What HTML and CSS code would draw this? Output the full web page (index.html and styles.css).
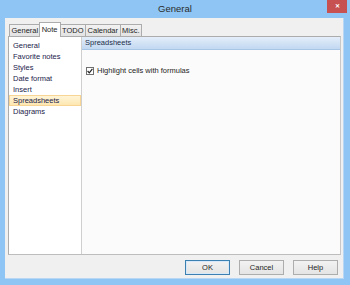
FILE: index.html
```html
<!DOCTYPE html>
<html lang="en">
<head>
    <meta charset="UTF-8">
    <meta name="viewport" content="width=device-width, initial-scale=1.0">
    <title>General</title>
    <link rel="stylesheet" href="styles.css">
</head>
<body>
    <div class="window">
        <div class="titlebar">
            <span class="title">General</span>
            <div class="close">&#10005;</div>
        </div>

        <div class="client">
            <div class="tabs">
                <div class="tab">General</div>
                <div class="tab active">Note</div>
                <div class="tab">TODO</div>
                <div class="tab">Calendar</div>
                <div class="tab">Misc.</div>
            </div>

            <div class="page">
                <div class="list">
                    <div class="item">General</div>
                    <div class="item">Favorite notes</div>
                    <div class="item">Styles</div>
                    <div class="item">Date format</div>
                    <div class="item">Insert</div>
                    <div class="item selected">Spreadsheets</div>
                    <div class="item">Diagrams</div>
                </div>

                <div class="panel">
                    <div class="panel-header">Spreadsheets</div>
                    <div class="panel-body">
                        <label class="check">
                            <span class="box">
                                <svg width="6" height="6" viewBox="0 0 6 6"><path d="M0.6 3 L2.3 4.8 L5.4 0.9" fill="none" stroke="#222" stroke-width="1.2"/></svg>
                            </span>
                            Highlight cells with formulas
                        </label>
                    </div>
                </div>
            </div>

            <div class="buttons">
                <button class="btn default">OK</button>
                <button class="btn">Cancel</button>
                <button class="btn">Help</button>
            </div>
        </div>
    </div>
</body>
</html>
```

FILE: styles.css
```css
body {
    margin: 0;
    padding: 0;
    font-family: "Liberation Sans", Arial, sans-serif;
    font-size: 7.5px;
    color: #1e1e1e;
}

.window {
    width: 350px;
    height: 285px;
    background-color: #8ec5f4;
    display: flex;
    flex-direction: column;
    box-sizing: border-box;
}

.titlebar {
    position: relative;
    height: 18px;
    text-align: center;
}

.title {
    display: inline-block;
    font-size: 9.5px;
    line-height: 18px;
    color: #2b2b2b;
}

.close {
    position: absolute;
    top: 0;
    left: 327px;
    width: 20px;
    height: 13px;
    background-color: #c75050;
    color: white;
    font-size: 6px;
    font-weight: bold;
    line-height: 13px;
    text-align: center;
}

.client {
    flex: 1;
    margin: 0 6px 6px 5px;
    background-color: #f0f0f0;
    border: 1px solid #b9d7f4;
    border-width: 0 1px 1px 0;
    padding: 0 0 0 3px;
    display: flex;
    flex-direction: column;
}

.tabs {
    display: flex;
    align-items: flex-end;
    height: 18px;
    padding-left: 1px;
}

.tab {
    height: 11px;
    line-height: 11px;
    padding: 0 1.5px;
    border: 1px solid #acacac;
    border-bottom: none;
    margin-right: -1px;
    background: linear-gradient(#f2f2f2, #e3e3e3);
}

.tab.active {
    height: 14px;
    line-height: 14px;
    background: #fff;
    margin: 0 -1px -1px -1px;
    padding: 0 2px;
    position: relative;
    z-index: 1;
}

.page {
    display: flex;
    width: 333px;
    height: 219px;
    border: 1px solid #acacac;
    border-right-color: #c8c8c8;
    border-bottom-color: #bdbdbd;
    box-sizing: border-box;
    background-color: #fff;
}

.list {
    width: 73px;
    background-color: #fff;
    border-right: 1px solid #cfcfcf;
    padding-top: 3px;
    box-sizing: border-box;
}

.item {
    height: 11px;
    line-height: 11px;
    padding-left: 4px;
    color: #1a1a4a;
}

.item.selected {
    background: linear-gradient(#fff6dc, #fde6ad);
    box-shadow: inset 0 0 0 1px #f8d595;
}

.panel {
    flex: 1;
    display: flex;
    flex-direction: column;
    background-color: #fbfbfb;
}

.panel-header {
    height: 12px;
    line-height: 12px;
    padding-left: 3px;
    background: linear-gradient(#e4eefa, #c2d8f1);
    border-bottom: 1px solid #a8c5e6;
    color: #1c2f4a;
}

.panel-body {
    padding: 16px 0 0 4px;
}

.check {
    display: flex;
    align-items: center;
    gap: 3px;
}

.box {
    width: 6px;
    height: 6px;
    border: 1px solid #707070;
    background-color: #fff;
    display: flex;
    align-items: center;
    justify-content: center;
}

.buttons {
    display: flex;
    justify-content: flex-end;
    gap: 9px;
    padding: 5px 5px 0 0;
}

.btn {
    width: 45px;
    height: 15px;
    padding: 0;
    font-family: "Liberation Sans", Arial, sans-serif;
    font-size: 7.5px;
    color: #1e1e1e;
    border: 1px solid #adadad;
    background: linear-gradient(#f2f2f2, #e4e4e4);
}

.btn.default {
    border-color: #3c7fb1;
    box-shadow: inset 0 0 0 1px #d7e9f8;
}
```
